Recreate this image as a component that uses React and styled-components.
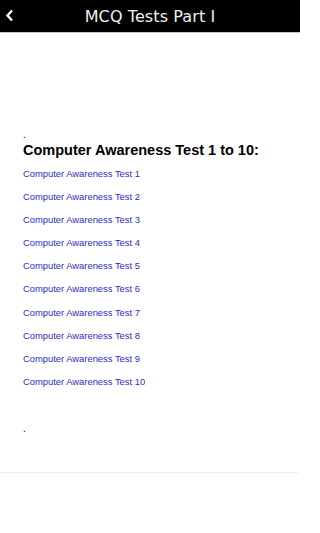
import React from 'react';
import styled, { createGlobalStyle } from 'styled-components';

const tests = Array.from({ length: 10 }, (_, i) => `Computer Awareness Test ${i + 1}`);

const App = () => {
    return (
        <Page>
            <GlobalStyle />
            <Header>
                <BackButton aria-label="Back">
                    <svg width="9" height="13" viewBox="0 0 9 13">
                        <path d="M7 1.5 L2.5 6.5 L7 11.5" fill="none" stroke="#fff" strokeWidth="2.4" />
                    </svg>
                </BackButton>
                <Title>MCQ Tests Part I</Title>
            </Header>
            <Content>
                <Dot>.</Dot>
                <Heading>Computer Awareness Test 1 to 10:</Heading>
                <LinkList>
                    {tests.map((t) => (
                        <TestLink key={t} href="#">{t}</TestLink>
                    ))}
                </LinkList>
                <BottomDot>.</BottomDot>
            </Content>
            <Divider />
        </Page>
    );
};

// --- Styled Components ---

const GlobalStyle = createGlobalStyle`
  body {
    margin: 0;
    background: #fff;
    font-family: "Liberation Sans", Arial, sans-serif;
  }
`;

const Page = styled.div`
  width: 300px;
  height: 533px;
  display: flex;
  flex-direction: column;
`;

const Header = styled.div`
  position: relative;
  height: 32px;
  background: #000;
  border-bottom: 1px solid #c8c8c8;
  display: flex;
  align-items: center;
  justify-content: center;
`;

const BackButton = styled.div`
  position: absolute;
  left: 5px;
  top: 9px;
  display: flex;
`;

const Title = styled.h1`
  margin: 0;
  color: #f0f0f0;
  font-family: "DejaVu Sans", Verdana, sans-serif;
  font-size: 16px;
  font-weight: normal;
  letter-spacing: 0.1px;
`;

const Content = styled.div`
  padding: 98px 0 0 23px;
  display: flex;
  flex-direction: column;
  height: 341px;
`;

const Dot = styled.div`
  font-size: 10px;
  line-height: 8px;
  color: #000;
`;

const BottomDot = styled(Dot)`
  margin-top: 32px;
`;

const Heading = styled.h2`
  margin: 2px 0 0;
  font-size: 14.5px;
  line-height: 18px;
  font-weight: bold;
  color: #000;
`;

const LinkList = styled.div`
  display: flex;
  flex-direction: column;
  padding-top: 3px;
`;

const TestLink = styled.a`
  font-size: 9.4px;
  line-height: 23.1px;
  color: #2c2cc8;
  text-decoration: none;
`;

const Divider = styled.div`
  height: 1px;
  background: #eeeeee;
  margin-right: 2px;
`;

export default App;
